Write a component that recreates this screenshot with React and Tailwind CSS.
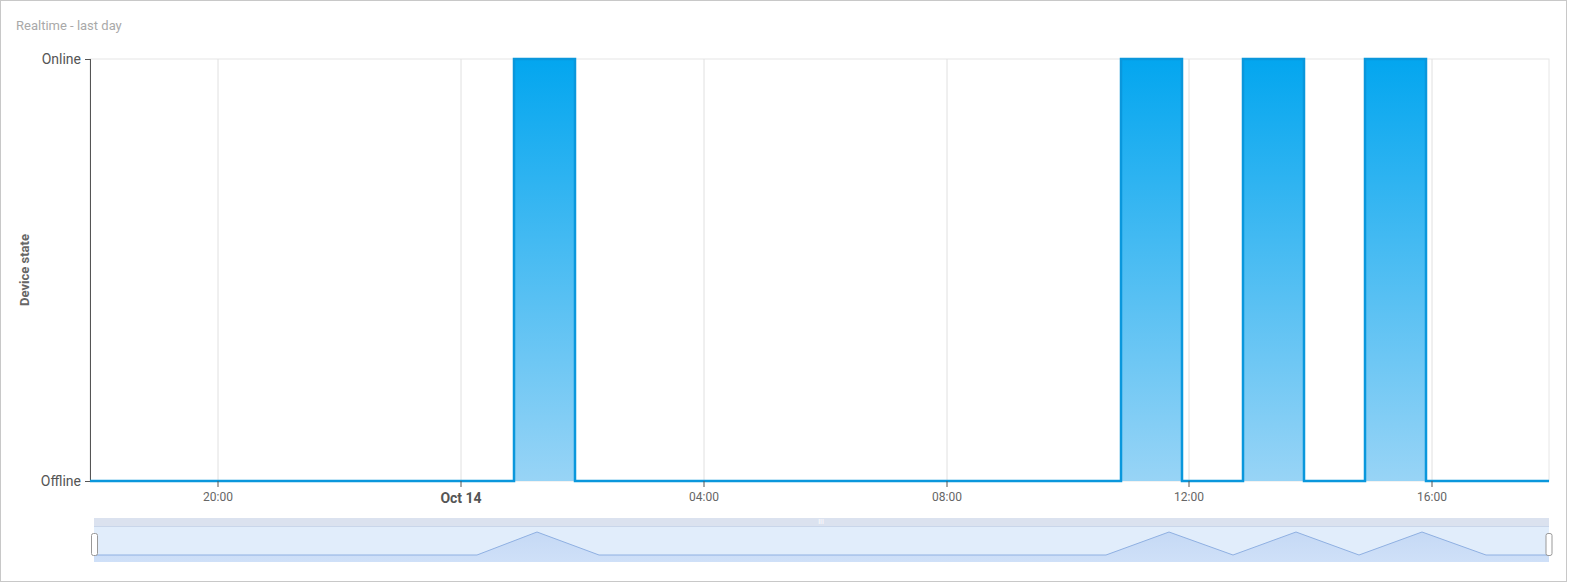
export default function App() {
  const grid = [217, 460, 703, 946, 1188, 1431];
  const labels = [["20:00", 217, false], ["Oct 14", 460, true], ["04:00", 703, false], ["08:00", 946, false], ["12:00", 1188, false], ["16:00", 1431, false]];
  const bars = [[513, 574], [1120, 1181], [1242, 1303], [1364, 1425]];
  let d = "M89,480";
  bars.forEach(([a, b]) => { d += ` L${a},480 L${a},58 L${b},58 L${b},480`; });
  d += " L1548,480";
  return (
    <div className="w-[1567px] h-[582px] border border-[#c8c8c8] bg-white flex flex-col" style={{ fontFamily: "Roboto, 'Liberation Sans', sans-serif" }}>
      <div className="pl-[15px] pt-[16px] h-[40px] text-[13px] text-[#a9a9a9] leading-[18px]">Realtime - last day</div>
      <svg width="1565" height="540" viewBox="0 40 1565 540" className="block">
        <defs>
          <linearGradient id="g" x1="0" y1="0" x2="0" y2="1">
            <stop offset="0" stopColor="#03a6ef" />
            <stop offset="1" stopColor="#98d4f6" />
          </linearGradient>
          <linearGradient id="n" x1="0" y1="0" x2="0" y2="1">
            <stop offset="0" stopColor="#c5d9f5" />
            <stop offset="1" stopColor="#cfe0f8" />
          </linearGradient>
        </defs>
        <rect x="89" y="58" width="1459" height="422" fill="#fff" stroke="#e6e6e6" />
        {grid.map(x => <line key={x} x1={x} y1="58" x2={x} y2="480" stroke="#e0e0e0" />)}
        <line x1="89.5" y1="58" x2="89.5" y2="480" stroke="#555" />
        <line x1="84" y1="58.5" x2="89" y2="58.5" stroke="#555" />
        <line x1="84" y1="480.5" x2="89" y2="480.5" stroke="#555" />
        {bars.map(([a, b]) => <rect key={a} x={a} y="58" width={b - a} height="422" fill="url(#g)" />)}
        <path d={d} fill="none" stroke="#0a97dc" strokeWidth="2.5" />
        {grid.map(x => <line key={"t" + x} x1={x} y1="480" x2={x} y2="486" stroke="#555" />)}
        <text x="80" y="63" textAnchor="end" fontSize="14" fill="#555">Online</text>
        <text x="80" y="485" textAnchor="end" fontSize="14" fill="#555">Offline</text>
        <text x="28" y="269" textAnchor="middle" fontSize="13" fontWeight="bold" fill="#666" transform="rotate(-90 28 269)">Device state</text>
        {labels.map(([t, x, b]) => <text key={t} x={x} y={b ? 502 : 500} textAnchor="middle" fontSize={b ? 14 : 12} fontWeight={b ? "bold" : "normal"} fill={b ? "#555" : "#666"}>{t}</text>)}
        <rect x="93" y="517" width="1455" height="8" fill="#dbe2ef" />
        <rect x="93" y="525" width="1455" height="36" fill="#e1edfb" />
        <path d="M93,554 L476,554 L536,531 L598,554 L1105,554 L1168,531 L1232,554 L1295,531 L1358,554 L1421,531 L1485,554 L1548,554 L1548,561 L93,561 Z" fill="url(#n)" />
        <polyline points="93,554 476,554 536,531 598,554 1105,554 1168,531 1232,554 1295,531 1358,554 1421,531 1485,554 1548,554" fill="none" stroke="#8fb0e2" strokeWidth="1" />
        <line x1="93" y1="525.5" x2="1548" y2="525.5" stroke="#c9d6ea" />
        <text x="820" y="523" textAnchor="middle" fontSize="7" fill="#fff">III</text>
        <rect x="90.5" y="532.5" width="6" height="22" rx="2" fill="#fff" stroke="#999" />
        <rect x="1545" y="532.5" width="6" height="22" rx="2" fill="#fff" stroke="#999" />
      </svg>
    </div>
  );
}
